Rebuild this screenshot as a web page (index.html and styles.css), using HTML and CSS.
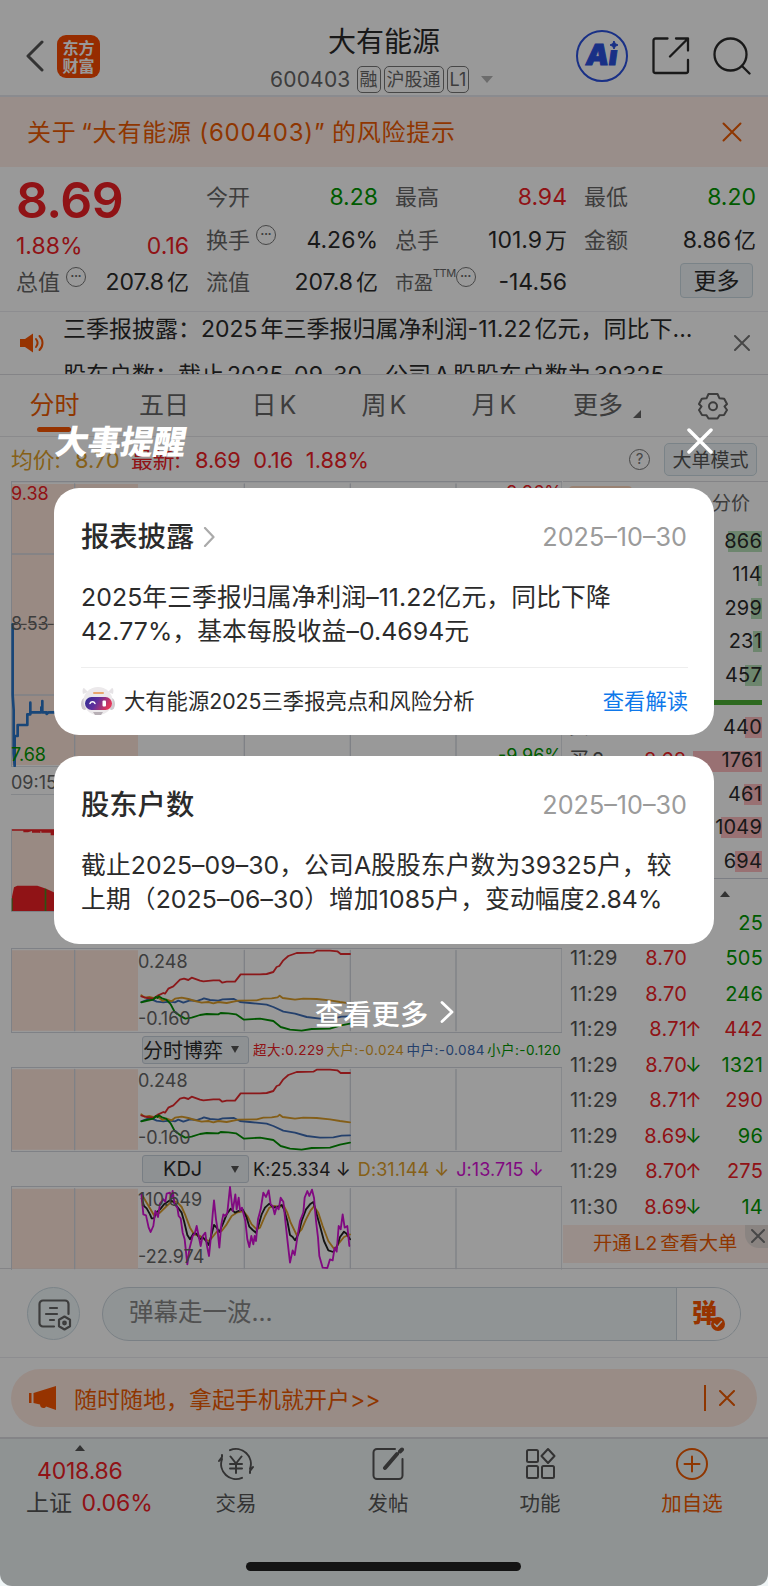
FILE: index.html
```html
<!DOCTYPE html>
<html lang="zh-CN">
  <head>
    <meta charset="UTF-8" />
    <meta name="viewport" content="width=device-width, initial-scale=1" />
    <title>大有能源 600403</title>
    <link rel="stylesheet" href="styles.css">
  </head>
  <body>
    <div class="app">
      <header class="header">
        <div class="header-left">
          <svg class="back" width="20" height="32" viewBox="0 0 20 32"><path d="M17 2 3 16l14 14" /></svg>
          <div class="logo">东方<br />财富</div>
        </div>
        <div class="header-title">
          <h1>大有能源</h1>
          <div class="sub">
            <span class="code">600403</span>
            <span class="tag">融</span>
            <span class="tag">沪股通</span>
            <span class="tag">L1</span>
            <i class="caret"></i>
          </div>
        </div>
        <div class="header-right">
          <div class="ai"><span>Ai</span><svg width="8" height="8" viewBox="0 0 8 8"><path d="M4 0 5.3 2.7 8 4 5.3 5.3 4 8 2.7 5.3 0 4 2.7 2.7Z" /></svg></div>
          <svg class="line-icon" width="38" height="38" viewBox="0 0 38 38"><path d="M15.500 1.500H3.500a2 2 0 0 0-2 2v30.500a2 2 0 0 0 2 2H34a2 2 0 0 0 2-2V23M24 1.500h12V13.500M36 1.500 18 19.500" /></svg>
          <svg class="line-icon" width="38" height="38" viewBox="0 0 38 38"><circle cx="17.500" cy="17.500" r="16" /><path d="m29 29 7.500 7.500" /></svg>
        </div>
      </header>

      <div class="banner">
        <span>关于<b class="ql">“</b>大有能源 (600403)<b class="qr">”</b>的风险提示</span>
        <svg class="x" width="20" height="20" viewBox="0 0 20 20"><path d="m1.500 1.500 17 17m0-17-17 17" /></svg>
      </div>

      <section class="quote">
        <div class="quote-col">
          <div class="price red">8.69</div>
          <div class="change red"><span>1.88%</span><span>0.16</span></div>
          <div class="item"><label>总值<i class="dots">•••</i></label><span>207.8<em>亿</em></span></div>
        </div>
        <div class="quote-col">
          <div class="item"><label>今开</label><span class="green">8.28</span></div>
          <div class="item"><label>换手<i class="dots">•••</i></label><span>4.26%</span></div>
          <div class="item"><label>流值</label><span>207.8<em>亿</em></span></div>
        </div>
        <div class="quote-col">
          <div class="item"><label>最高</label><span class="red">8.94</span></div>
          <div class="item"><label>总手</label><span>101.9<em>万</em></span></div>
          <div class="item"><label class="small">市盈<sup>TTM</sup><i class="dots">•••</i></label><span>-14.56</span></div>
        </div>
        <div class="quote-col">
          <div class="item"><label>最低</label><span class="green">8.20</span></div>
          <div class="item"><label>金额</label><span>8.86<em>亿</em></span></div>
          <div class="item"><label></label><button class="more">更多</button></div>
        </div>
      </section>

      <section class="news">
        <svg width="24" height="20" viewBox="0 0 24 20"><path class="fill" d="M0 6h5l8-5.500v19L5 14H0Z" /><path class="wave" d="M16 6c2 2.500 2 5.500 0 8M19.500 3c4 4 4 10 0 14" /></svg>
        <div class="news-list">
          <p>三季报披露：2025<u></u>年三季报归属净利润-11.22<u></u>亿元，同比下...</p>
          <p>股东户数：截止<u></u>2025-09-30，公司<u></u>A<u></u>股股东户数为<u></u>39325</p>
        </div>
        <svg class="x grey" width="16" height="16" viewBox="0 0 16 16"><path d="m1 1 14 14m0-14L1 15" /></svg>
      </section>

      <nav class="tabs">
        <span class="active">分时</span>
        <span>五日</span>
        <span>日<u></u>K</span>
        <span>周<u></u>K</span>
        <span>月<u></u>K</span>
        <span class="tab-more">更多<i></i></span>
        <svg width="30" height="28" viewBox="0 0 30 28"><path d="M10.500 2h9l2 4.300 4.700.4L29 12l-2.500 2.500L29 18l-3 5-4.500.2L19.500 26.500h-9L8.500 23.200 4 23 1 18l2.500-3.500L1 12l2.800-5.300 4.700-.4Z" /><circle cx="15" cy="14.300" r="4" /></svg>
      </nav>

      <div class="info">
        <span class="gold avg">均价: <b>8.70</b></span>
        <span class="red last">最新: <b>8.69</b><b>0.16</b><b>1.88%</b></span>
        <i class="help">?</i>
        <button class="mode">大单模式</button>
      </div>

      <div class="market">
        <div class="charts">
          <div class="chart time-chart">
            <svg width="551" height="286" viewBox="33 3 1653 858">
              <path class="auction" d="M35 12H414V855H35Z" />
              <path class="grid" d="M33 5H1686M33 222H1686M33 645H1686M33 861H1686M34 3V861M224 12V855M733 12V855M1051 12V855M1368 12V855M1686 3V861" />
              <path class="dash" d="M36 433H1686" />
              <path class="price-line" d="M38 433V645L41 690V820L44 858V768H53V735H82V703H91V668V697H124V682H127V663V697H140V702L146 697H240" />
            </svg>
            <span class="tl red">9.38</span>
            <span class="ml">8.53</span>
            <span class="bl green">7.68</span>
            <span class="tr red">9.96%</span>
            <span class="br green">-9.96%</span>
          </div>
          <div class="times">09:15</div>
          <div class="volume">
            <svg width="551" height="118" viewBox="33 942 1653 354">
              <path class="auction" d="M35 1048H414V1293H35Z" />
              <path class="grid" d="M33 942H1686M33 1295H1686M34 1048V1294" />
              <path class="vol-red" d="M36 1048H164V1066H152V1058H124V1054H121V1060L118 1058H96V1053L84 1057H70V1052H36ZM36 1293V1250L42 1222 52 1217H112L132 1224 145 1229 158 1235 164 1238V1293Z" />
              <path class="vol-green" d="M134 1226h5v67h-5ZM35 1255h3v38h-3Z" />
            </svg>
          </div>
          <div class="picker-row"><span class="picker">分时博弈<i></i></span></div>
          <div class="chart flow-chart">
            <svg width="551" height="85" viewBox="33 53 1653 255">
              <g id="flow">
                <path class="auction" d="M35 60H414V301H35Z" />
                <path class="grid" d="M33 54H1686M33 307H1686M34 54V307M224 60V301M733 60V301M1051 60V301M1368 60V301M1686 54V307" />
                <path class="l-blue" d="M424 215 440 209 455 207 470 214 490 216 510 214 525 216 535 211 550 217 570 210 590 212 605 207 612 204 630 209 655 211 668 207 702 206 720 215 750 218 800 223 820 230 850 244 885 250 920 260 960 265 1000 264 1025 259 1050 258" />
                <path class="l-gold" d="M424 195 434 202 448 200 460 203 474 201 488 212 500 208 515 213 525 205 545 202 565 206 585 212 605 217 625 215 640 219 655 215 680 218 715 211 770 210 790 205 815 204 833 201 839 196 848 203 885 208 910 205 950 206 990 210 1020 215 1050 219" />
                <path class="l-red" d="M424 198 440 203 460 205 475 195 490 188 495 190 505 175 520 168 540 148 552 145 565 149 575 142 600 151 610 153 640 150 658 150 667 157 680 154 705 154 722 132 780 132 800 131 820 125 830 110 838 107 850 90 865 77 890 68 940 67 950 61 990 61 1012 63 1022 71 1050 71" />
                <path class="l-green" d="M424 216 440 212 460 208 468 200 473 203 476 198 486 204 498 208 512 222 524 245 538 255 556 265 575 262 600 254 620 251 655 252 662 248 685 249 708 252 732 268 780 265 820 272 842 290 870 298 905 301 935 296 990 295 1020 286 1050 280" />
              </g>
            </svg>
            <span class="tl">0.248</span>
            <span class="bl">-0.160</span>
          </div>
          <div class="picker-row">
            <span class="picker">分时博弈<i></i></span>
            <span class="legend"><b class="red">超大:0.229</b><b class="gold">大户:-0.024</b><b class="blue">中户:-0.084</b><b class="green">小户:-0.120</b></span>
          </div>
          <div class="chart flow-chart">
            <svg width="551" height="85" viewBox="33 53 1653 255"><use href="#flow" /></svg>
            <span class="tl">0.248</span>
            <span class="bl">-0.160</span>
          </div>
          <div class="picker-row">
            <span class="picker kdj">KDJ<i></i></span>
            <span class="legend big"><b>K:25.334 ↓</b><b class="gold">D:31.144 ↓</b><b class="purple">J:13.715 ↓</b></span>
          </div>
          <div class="chart kdj-chart">
            <svg width="551" height="84" viewBox="33 765 1653 252">
              <path class="auction" d="M35 773H414V1013H35Z" />
              <path class="grid" d="M33 766H1686M34 766V1015M224 773V1013M733 773V1013M1051 773V1013M1368 773V1013M1686 766V1015" />
              <path class="l-gold" d="M425 790 440 815 462 853 480 845 500 825 515 812 530 812 545 828 555 850 570 890 582 910 600 915 615 925 628 930 640 915 652 900 665 900 680 880 695 855 710 845 730 840 742 855 755 880 770 895 780 890 795 855 808 830 822 825 840 828 850 822 862 845 872 875 890 912 905 895 918 865 932 838 942 826 955 845 968 885 985 930 1003 955 1018 935 1032 918 1050 910" />
              <path class="l-black" d="M425 803 432 825 440 832 450 850 455 862 462 862 468 845 480 835 492 820 510 808 520 812 530 825 545 845 552 870 562 912 570 925 580 908 590 908 600 925 608 918 618 930 626 942 632 920 642 882 650 890 658 903 668 880 680 850 692 833 705 845 715 840 728 835 740 860 748 887 758 897 768 905 775 885 785 850 795 830 808 818 820 830 830 828 845 822 852 835 862 870 870 912 878 918 885 928 895 910 905 870 918 835 930 820 940 813 950 850 960 885 972 930 985 958 1000 963 1010 950 1020 918 1032 902 1040 908 1050 925" />
              <path class="l-purple" d="M424 788 430 850 438 853 446 890 452 903 460 885 466 840 474 858 480 818 490 805 496 812 500 788 510 785 514 802 518 780 524 820 532 830 536 855 542 862 548 905 554 925 562 1000 568 955 578 915 584 908 590 885 596 915 602 945 608 915 616 905 620 940 627 975 632 925 638 850 642 808 648 865 652 890 658 950 664 880 670 850 676 855 682 845 690 768 698 840 706 790 710 835 716 800 720 838 726 830 736 870 742 925 748 948 754 915 760 940 764 915 768 930 774 865 782 835 790 785 798 798 806 778 812 820 818 825 824 850 830 828 836 835 842 800 850 812 856 870 862 925 870 995 878 958 884 972 892 920 900 870 910 845 914 800 922 780 928 795 936 776 942 800 948 870 954 920 958 975 968 1010 982 1011 990 985 998 988 1004 950 1010 962 1016 885 1022 895 1028 850 1034 890 1042 885 1048 945" />
            </svg>
            <span class="tl">110.649</span>
            <span class="bl">-22.974</span>
          </div>
        </div>

        <aside class="depth">
          <div class="depth-tabs"><i></i><span>分价</span></div>
          <div class="row ask"><span></span><span></span><b style="--w: 34px">866</b></div>
          <div class="row ask"><span></span><span></span><b style="--w: 4px">114</b></div>
          <div class="row ask"><span></span><span></span><b style="--w: 11px">299</b></div>
          <div class="row ask"><span></span><span></span><b style="--w: 9px">231</b></div>
          <div class="row ask"><span></span><span></span><b style="--w: 17px">457</b></div>
          <div class="ratio"></div>
          <div class="row bid"><span>买<u></u>1</span><span class="red"></span><b style="--w: 17px">440</b></div>
          <div class="row bid"><span>买<u></u>2</span><span class="red">8.68</span><b style="--w: 69px">1761</b></div>
          <div class="row bid"><span></span><span></span><b style="--w: 18px">461</b></div>
          <div class="row bid"><span></span><span></span><b style="--w: 41px">1049</b></div>
          <div class="row bid"><span></span><span></span><b style="--w: 27px">694</b></div>
          <div class="expand"><i></i></div>
          <div class="trade"><span></span><span></span><i></i><b class="green">25</b></div>
          <div class="trade"><span>11:29</span><span class="red">8.70</span><i></i><b class="green">505</b></div>
          <div class="trade"><span>11:29</span><span class="red">8.70</span><i></i><b class="green">246</b></div>
          <div class="trade"><span>11:29</span><span class="red">8.71</span><i class="red">↑</i><b class="red">442</b></div>
          <div class="trade"><span>11:29</span><span class="red">8.70</span><i class="green">↓</i><b class="green">1321</b></div>
          <div class="trade"><span>11:29</span><span class="red">8.71</span><i class="red">↑</i><b class="red">290</b></div>
          <div class="trade"><span>11:29</span><span class="red">8.69</span><i class="green">↓</i><b class="green">96</b></div>
          <div class="trade"><span>11:29</span><span class="red">8.70</span><i class="red">↑</i><b class="red">275</b></div>
          <div class="trade"><span>11:30</span><span class="red">8.69</span><i class="green">↓</i><b class="green">14</b></div>
          <div class="level2">开通<u></u>L2<u></u>查看大单<span class="level2-close"><svg class="x grey" width="14" height="14" viewBox="0 0 14 14"><path d="m1 1 12 12m0-12L1 13" /></svg></span></div>
        </aside>
      </div>

      <div class="barrage">
        <div class="barrage-set">
          <svg width="34" height="32" viewBox="0 0 34 32"><path d="M16 27.500H5a3.500 3.500 0 0 1-3.500-3.500V5A3.500 3.500 0 0 1 5 1.500h22A3.500 3.500 0 0 1 30.500 5v10M12 9h7M8 15h11M12 21h4" /><path d="m26.500 17.500 5.500 3.200v6.600l-5.500 3.200-5.500-3.200v-6.600Z" /><circle cx="26.500" cy="24" r="1.300" /></svg>
        </div>
        <div class="barrage-box">
          <span>弹幕走一波...</span>
          <div class="barrage-send">弹<svg width="14" height="14" viewBox="0 0 14 14"><circle cx="7" cy="7" r="7" /><path d="m3.500 7 2.500 2.500 4.500-5" /></svg></div>
        </div>
      </div>

      <div class="promo">
        <div class="promo-bar">
          <svg width="28" height="24" viewBox="0 0 28 24"><path d="M0 7h2.500v10H0ZM4.500 7 27 0v24L17 20.500c-1 2.500-6 2-6-2L4.500 17Z" /></svg>
          <span>随时随地，拿起手机就开户&gt;&gt;</span>
          <i class="sep"></i>
          <svg class="x" width="16" height="16" viewBox="0 0 16 16"><path d="m1 1 14 14m0-14L1 15" /></svg>
        </div>
      </div>

      <footer class="bottom">
        <div class="index">
          <i class="up"></i>
          <div class="point red">4018.86</div>
          <div>上证<u></u> <span class="red">0.06%</span></div>
        </div>
        <div class="nav">
          <svg width="36" height="34" viewBox="0 0 36 34"><path d="M12 3.200A15 15 0 0 1 32 22M24 30.800A15 15 0 0 1 4 12M1 14l3-4v-2M35 20l-3 4v2M12.500 9.500l5.500 7 5.500-7M12 17h12M12 21.500h12M18 17v9" /></svg>
          <span>交易</span>
        </div>
        <div class="nav">
          <svg width="34" height="34" viewBox="0 0 34 34"><path d="M24 2H6a3.500 3.500 0 0 0-3.500 3.500v23A3.500 3.500 0 0 0 6 32h22a3.500 3.500 0 0 0 3.500-3.500V12" /><path class="pen" d="m14 21 12-14M29 4.500l2-2" /></svg>
          <span>发帖</span>
        </div>
        <div class="nav">
          <svg width="34" height="34" viewBox="0 0 34 34"><rect x="4" y="3" width="11" height="12" rx="1.500" /><rect x="4" y="19" width="11" height="12" rx="1.500" /><rect x="19" y="19" width="12" height="12" rx="1.500" /><path d="m25 2 6.500 7-6.500 7-6.500-7Z" /></svg>
          <span>功能</span>
        </div>
        <div class="nav orange">
          <svg width="34" height="34" viewBox="0 0 34 34"><circle cx="17" cy="17" r="15" /><path d="M9.500 17h15M17 9.500v15" /></svg>
          <span>加自选</span>
        </div>
      </footer>
      <div class="home"></div>
    </div>

    <!-- reminder popup over the whole page -->
    <div class="mask">
      <div class="mask-head">
        <h2>大事提醒</h2>
        <svg width="26" height="26" viewBox="0 0 26 26"><path d="m2 2 22 22m0-22L2 24" /></svg>
      </div>
      <div class="card">
        <div class="card-head">
          <h3>报表披露<svg width="12" height="20" viewBox="0 0 12 20"><path d="m2 1 8.500 9L2 19" /></svg></h3>
          <time>2025–10–30</time>
        </div>
        <p>2025年三季报归属净利润–11.22亿元，同比下降<br />42.77%，基本每股收益–0.4694元</p>
        <div class="card-foot">
          <svg class="bot" width="34" height="30" viewBox="0 0 34 30">
            <defs>
              <linearGradient id="visor" x1="0" y1="0" x2="1" y2="0.300">
                <stop offset="0" stop-color="#2c2c93" />
                <stop offset="0.500" stop-color="#60309c" />
                <stop offset="1" stop-color="#e0355a" />
              </linearGradient>
            </defs>
            <path d="M2 8C1 4 2 2 3 2l4 4ZM32 8c1-4 0-6-1-6l-4 4Z" fill="#e6e3e6" />
            <ellipse cx="3.500" cy="18" rx="3.500" ry="6" fill="#cfc9cf" />
            <ellipse cx="30.500" cy="18" rx="3.500" ry="6" fill="#cfc9cf" />
            <ellipse cx="17" cy="15" rx="14.500" ry="14" fill="#ece9eb" />
            <path d="M12 26h10l-2 3h-6Z" fill="#b7afb5" />
            <rect x="12" y="6" width="11" height="2" rx="1" fill="#e9a66d" />
            <rect x="4" y="11" width="27" height="13" rx="6.500" fill="url(#visor)" />
            <path d="M9 17.500c1-2.500 4-2.500 5 0" fill="none" stroke="#fff" stroke-width="1.500" />
            <rect x="21.500" y="14.500" width="3.500" height="6" rx="1" fill="#fff" />
          </svg>
          <span>大有能源2025三季报亮点和风险分析</span>
          <a>查看解读</a>
        </div>
      </div>
      <div class="card second">
        <div class="card-head">
          <h3>股东户数</h3>
          <time>2025–10–30</time>
        </div>
        <p>截止2025–09–30，公司A股股东户数为39325户，较<br />上期（2025–06–30）增加1085户，变动幅度2.84%</p>
      </div>
      <div class="see-more">查看更多<svg width="14" height="22" viewBox="0 0 14 22"><path d="m2 1.500 10 9.500-10 9.500" /></svg></div>
    </div>
  </body>
</html>
```

FILE: styles.css
```css
* {
  margin: 0;
  padding: 0;
  box-sizing: border-box;
}
body {
  width: 768px;
  height: 1586px;
  position: relative;
  overflow: hidden;
  background: #fff;
  color: #2b2b2b;
  font-family: Inter, "Noto Sans CJK SC", sans-serif;
  font-size: 22px;
}
i,
em {
  font-style: normal;
}
b {
  font-weight: 400;
}
/* thin gap between latin and chinese glyphs */
u {
  display: inline-block;
  width: 3px;
}
svg {
  display: block;
  flex: none;
  fill: none;
  stroke: currentColor;
  stroke-linecap: round;
  stroke-linejoin: round;
}
button {
  font: inherit;
  color: inherit;
}
.red {
  color: #f02026;
}
.green {
  color: #009800;
}
.gold {
  color: #e0a028;
}
.blue {
  color: #3d6cb4;
}
.purple {
  color: #d810d8;
}
.orange {
  color: #ee5a00;
}
.x {
  color: #ee5a00;
  stroke-width: 2;
}
.x.grey {
  color: #777;
}

/* header */
.header {
  height: 97px;
  display: grid;
  grid-template-columns: 220px 1fr 220px;
  border-bottom: 2px solid #e6e8ee;
}
.header-left {
  display: flex;
  align-items: center;
  gap: 12px;
  padding: 16px 0 0 25px;
}
.back {
  color: #555;
  stroke-width: 3;
}
.logo {
  width: 43px;
  height: 43px;
  border-radius: 9px;
  background: #fb4a00;
  color: #fff;
  font-family: "Noto Sans CJK SC", sans-serif;
  font-size: 16px;
  font-weight: 700;
  line-height: 18px;
  padding-top: 3px;
  text-align: center;
}
.header-title {
  text-align: center;
}
h1 {
  margin-top: 22px;
  font-size: 28px;
  font-weight: 400;
  line-height: 40px;
}
.sub {
  display: flex;
  align-items: center;
  height: 34px;
  padding-left: 50px;
  color: #666;
  font-size: 21px;
}
.code {
  letter-spacing: 0.2px;
  margin-right: 6px;
}
.tag {
  height: 27px;
  line-height: 25px;
  border: 1.500px solid #777;
  border-radius: 5px;
  padding: 0 2px;
  margin-right: 3px;
  font-size: 18px;
}
.caret {
  margin-left: 9px;
  border: 6px solid transparent;
  border-top: 7px solid #b5b5b5;
  border-bottom: 0;
}
.header-right {
  display: flex;
  align-items: center;
  padding: 16px 0 0 28px;
}
.ai {
  flex: none;
  width: 52px;
  height: 52px;
  border: 2.500px solid #2a50e0;
  border-radius: 50%;
  position: relative;
  color: #2a50e0;
  font-size: 29px;
  font-weight: 900;
  line-height: 46px;
  text-align: center;
  margin-right: 24px;
}
.ai span {
  display: block;
  transform: skewX(-8deg);
  -webkit-text-stroke: 1px #2a50e0;
}
.ai svg {
  position: absolute;
  left: 32px;
  top: 9px;
  fill: #2a50e0;
  background: #fff;
  box-shadow: 0 0 0 1px #fff;
}
.line-icon {
  stroke-width: 2.300;
  margin-right: 23px;
}

.banner {
  height: 70px;
  display: flex;
  align-items: center;
  justify-content: space-between;
  padding: 0 26px 4px 27px;
  background: #ffede6;
  color: #ee5a00;
  font-size: 24px;
  letter-spacing: 0.800px;
}
.banner .x {
  margin-top: 3px;
}
.ql,
.qr {
  display: inline-block;
  width: 16px;
  text-align: right;
}
.qr {
  width: 18px;
  text-align: left;
}

/* quote */
.quote {
  height: 145px;
  padding: 9px 12px 0 16px;
  display: grid;
  grid-template-columns: 173px 172px 172px 172px;
  column-gap: 17px;
  border-bottom: 1px solid #ececf0;
  font-size: 23px;
}
.price {
  height: 49px;
  line-height: 48px;
  font-size: 50px;
  font-weight: 600;
  letter-spacing: -0.600px;
}
.change {
  height: 36px;
  padding-top: 3px;
  line-height: 36px;
}
.change,
.item {
  display: flex;
  justify-content: space-between;
}
.item {
  height: 42.500px;
  line-height: 42px;
}
.item em {
  font-size: 22px;
  margin-left: 3px;
}
.item label {
  display: flex;
  color: #666;
  font-size: 22px;
}
.item label.small {
  font-size: 19px;
  line-height: 46px;
}
.item sup {
  font-size: 11px;
  line-height: 24px;
  letter-spacing: -0.500px;
}
.dots {
  width: 20px;
  height: 20px;
  margin: 6px 0 0 6px;
  border: 1.500px solid #777;
  border-radius: 50%;
  font-size: 6.500px;
  line-height: 17px;
  text-align: center;
}
.small .dots {
  margin-left: 0;
}
.more {
  width: 73px;
  height: 35px;
  margin: 2px 3px 0 0;
  border: 1px solid #ccdbe3;
  border-radius: 4px;
  background: #f1f6f8;
  line-height: 32px;
}

.news {
  height: 63px;
  display: flex;
  align-items: center;
  padding: 0 18px 0 20px;
  border-bottom: 1px solid #dcdce2;
}
.fill {
  fill: #fb5500;
  stroke: none;
}
.wave {
  stroke: #fb5500;
  stroke-width: 2;
}
.news-list {
  width: 670px;
  height: 62px;
  margin: 0 auto 0 19px;
  overflow: hidden;
  font-size: 23px;
  white-space: nowrap;
}
.news-list p {
  height: 46px;
  line-height: 34px;
}

/* period tabs */
.tabs {
  height: 62px;
  display: flex;
  align-items: center;
  border-bottom: 1px solid #e6e6ea;
  color: #666;
  font-size: 25px;
}
.tabs span {
  width: 110px;
  height: 61px;
  line-height: 60px;
  text-align: center;
}
.tabs .active {
  width: 109px;
  color: #ee5a00;
  position: relative;
}
.active::after {
  content: "";
  position: absolute;
  left: 37px;
  bottom: 4px;
  width: 34px;
  height: 5px;
  border-radius: 3px;
  background: #fb5500;
}
.tabs .tab-more {
  width: 120px;
  padding-right: 22px;
  position: relative;
}
.tab-more i {
  position: absolute;
  left: 84px;
  top: 35px;
  border: 4px solid #666;
  border-top-color: transparent;
  border-left-color: transparent;
}
.tabs svg {
  margin-left: 29px;
  stroke-width: 2;
}

.info {
  height: 44px;
  display: flex;
  align-items: center;
  padding: 0 11px 0 11px;
  font-size: 21.800px;
}
.info > span {
  margin-top: -2px;
}
.info b {
  margin-left: 8px;
}
.info .last b + b {
  margin-left: 12.500px;
}
.avg {
  width: 120px;
}
.help {
  margin-left: auto;
  width: 21px;
  height: 21px;
  border: 1.500px solid #777;
  border-radius: 50%;
  color: #777;
  font-size: 15px;
  line-height: 18px;
  text-align: center;
}
.mode {
  width: 93px;
  height: 33px;
  margin-left: 14px;
  padding-bottom: 2px;
  border: 1px solid #ccdbe3;
  border-radius: 5px;
  background: #f1f6f8;
  color: #555;
  font-size: 19px;
}

/* charts */
.market {
  height: 788px;
  display: flex;
  border-bottom: 1px solid #dcdce2;
}
.charts {
  width: 563px;
  padding-left: 11px;
}
.chart {
  position: relative;
  color: #666;
  font-size: 18px;
  line-height: 20px;
}
.chart span {
  position: absolute;
  left: 0;
}
.auction {
  fill: #ffe6da;
  stroke: none;
}
.grid {
  stroke: #d4d8e0;
  stroke-width: 4;
}
.dash {
  stroke: #555;
  stroke-width: 3;
  stroke-dasharray: 16 11;
}
.price-line {
  stroke: #2a75c8;
  stroke-width: 8;
}
.l-red,
.l-blue,
.l-gold,
.l-green,
.l-black,
.l-purple {
  stroke-width: 5.500;
}
.l-red {
  stroke: #e8282c;
}
.l-blue {
  stroke: #3d6cb4;
}
.l-gold {
  stroke: #dc9d28;
}
.l-green {
  stroke: #009000;
}
.l-black {
  stroke: #222;
}
.l-purple {
  stroke: #d810d8;
}
.vol-red {
  fill: #f02026;
  stroke: none;
}
.vol-green {
  fill: #4a8a20;
  stroke: none;
}
.time-chart {
  height: 286px;
}
.chart .tl {
  top: 3px;
}
.time-chart .ml {
  top: 133px;
}
.time-chart .bl {
  top: 264px;
}
.chart .tr,
.chart .br {
  left: auto;
  right: 1px;
  top: 2px;
}
.chart .br {
  top: 265px;
}
.times {
  height: 27px;
  line-height: 31px;
  color: #666;
  font-size: 18px;
}
.volume {
  height: 118px;
}
.flow-chart {
  height: 85px;
}
.kdj-chart {
  height: 84px;
}
.flow-chart .tl,
.kdj-chart .tl {
  left: 127px;
  top: 4px;
}
.flow-chart .bl,
.kdj-chart .bl {
  left: 127px;
  top: 61px;
}
.picker-row {
  height: 34px;
  display: flex;
  align-items: center;
  padding-left: 131px;
}
.volume + .picker-row {
  height: 36px;
}
.picker {
  width: 107px;
  height: 28px;
  flex: none;
  display: flex;
  align-items: center;
  justify-content: space-between;
  padding: 0 9px 2px 0;
  border: 1px solid #c9d2dc;
  border-radius: 3px;
  background: #edf2f5;
  font-size: 20px;
}
.picker i {
  border: 4px solid transparent;
  border-top: 7px solid #555;
  border-bottom: 0;
}
.picker.kdj {
  padding: 0 9px 0 20px;
}
.legend {
  display: flex;
  gap: 2px;
  margin-left: 4px;
  padding-bottom: 2px;
  font-size: 13.500px;
  letter-spacing: 0.450px;
  white-space: nowrap;
}
.legend.big {
  gap: 7px;
  padding-bottom: 0;
  font-size: 18px;
  letter-spacing: 0.050px;
}

/* order book */
.depth {
  width: 205px;
  font-size: 20px;
}
.depth-tabs {
  height: 44px;
  display: flex;
  justify-content: space-between;
  padding: 4px 18px 0 6px;
  border-top: 1px solid #dcdce2;
  color: #666;
  font-size: 19px;
  line-height: 36px;
}
.depth-tabs i {
  width: 63px;
  height: 32px;
  border-radius: 4px;
  background: #ffd9c0;
}
.row {
  height: 33.400px;
  line-height: 33px;
  padding: 0 6px;
  display: grid;
  grid-template-columns: 50px 67px 1fr;
  color: #555;
}
.row span + span {
  text-align: right;
}
.row b {
  color: #2b2b2b;
  text-align: right;
  letter-spacing: 0.200px;
  background: linear-gradient(#b6e0b8, #b6e0b8) no-repeat right center / var(--w) 21px;
}
.bid b {
  background-image: linear-gradient(#ffbcc0, #ffbcc0);
}
.ratio {
  height: 19px;
  border: solid #fff;
  border-width: 8px 6px 6px 0;
  background: #4bb035;
}
.expand {
  height: 28px;
  border-top: 1px solid #cfd3dc;
  padding: 12px 0 0 157px;
}
.expand i,
.up {
  display: block;
  width: 10px;
  border: 5px solid transparent;
  border-bottom: 6px solid #555;
  border-top: 0;
}
.trade {
  height: 35.500px;
  line-height: 35px;
  padding: 0 5px 0 7px;
  display: grid;
  grid-template-columns: 50px 67px 14px 1fr;
  color: #555;
  letter-spacing: 0.200px;
}
.trade span + span,
.trade b {
  text-align: right;
}
.trade i {
  width: 14px;
  font-size: 20px;
  text-indent: -2px;
}
.level2 {
  height: 38px;
  background: #ffede6;
  color: #ee5a00;
  font-size: 19.300px;
  line-height: 36px;
  padding-left: 30px;
  position: relative;
  white-space: nowrap;
}
.level2-close {
  position: absolute;
  top: 0;
  right: 0;
  width: 23px;
  height: 23px;
  padding: 4px 0 0 6px;
  border-bottom-left-radius: 14px;
  background: #e6dcd8;
}

/* barrage input */
.barrage {
  height: 89px;
  display: flex;
  align-items: center;
  gap: 22px;
  padding: 1px 27px 0;
  border-bottom: 1px solid #ececf0;
}
.barrage-set {
  width: 53px;
  height: 53px;
  border: 1px solid #ccdbe3;
  border-radius: 50%;
  background: #f1f8fa;
  padding: 11px 0 0 10px;
  color: #666;
}
.barrage-set svg {
  stroke-width: 2.200;
}
.barrage-box {
  flex: 1;
  height: 54px;
  display: flex;
  align-items: center;
  border: 1px solid #ccd6de;
  border-radius: 27px;
  background: #f0f7f9;
  color: #888;
  font-size: 24.500px;
  overflow: hidden;
}
.barrage-box span {
  flex: 1;
  padding: 0 0 7px 26px;
}
.barrage-send {
  width: 64px;
  height: 52px;
  border-left: 1px solid #ccd6de;
  background: #fff;
  color: #fb5500;
  font-size: 25px;
  font-weight: 900;
  line-height: 50px;
  padding-left: 15px;
  position: relative;
}
.barrage-send svg {
  position: absolute;
  left: 34px;
  top: 29px;
  fill: #fb5500;
  stroke: #fff;
  stroke-width: 1.500;
}
.barrage-send circle {
  stroke: none;
}

.promo {
  height: 79px;
  padding: 11px 11px 0;
}
.promo-bar {
  height: 58px;
  display: flex;
  align-items: center;
  border-radius: 29px;
  background: #ffe9e0;
  padding: 0 22px 0 18px;
  color: #ee5a00;
  font-size: 23px;
}
.promo-bar svg:first-child {
  fill: #fb5500;
  stroke: none;
  margin-right: 17px;
}
.sep {
  width: 2px;
  height: 26px;
  margin: 0 13px 0 auto;
  background: #ee5a00;
}

/* bottom nav */
.bottom {
  height: 150px;
  display: flex;
  border-top: 2px solid #dcdce2;
  background: #eff5f6;
  font-size: 23px;
  color: #555;
}
.index {
  width: 160px;
  padding: 6px 0 0 26px;
  line-height: 32px;
  white-space: nowrap;
}
.point {
  padding: 4px 0 0 11px;
  letter-spacing: -0.200px;
}
.index .up {
  margin-left: 49px;
}
.nav {
  width: 152px;
  display: flex;
  flex-direction: column;
  align-items: center;
  padding-top: 8px;
  font-size: 20.500px;
}
.nav svg {
  stroke-width: 2;
  margin-bottom: 6px;
}
.nav .pen {
  stroke-width: 4;
}
.home {
  position: absolute;
  left: 246px;
  top: 1562px;
  width: 275px;
  height: 9px;
  border-radius: 5px;
  background: #222;
}

/* popup */
.mask {
  position: absolute;
  inset: 0;
  padding: 421px 54px 0;
  background: rgba(0, 0, 0, 0.4);
  border-radius: 0 0 12px 12px;
}
.mask-head {
  height: 67px;
  display: flex;
  justify-content: space-between;
  padding: 7px 1px 0 0;
  color: #fff;
}
.mask-head svg {
  stroke-width: 3.500;
}
h2 {
  margin-left: -1px;
  font-size: 33px;
  font-weight: 900;
  line-height: 28px;
  letter-spacing: -0.500px;
  transform: skewX(-10deg);
}
.card {
  height: 247px;
  padding: 24px 26px 0 27px;
  border-radius: 25px;
  background: #fff;
}
.card.second {
  height: 188px;
  margin-top: 21px;
}
.card-head {
  height: 50px;
  display: flex;
  justify-content: space-between;
  line-height: 50px;
}
h3 {
  display: flex;
  align-items: center;
  gap: 9px;
  font-size: 28.300px;
  font-weight: 500;
}
h3 svg {
  color: #aaa;
  stroke-width: 2.200;
}
.card time {
  color: #9b9b9b;
  font-size: 25.200px;
  padding-right: 1px;
}
.card p {
  height: 105px;
  padding-top: 18px;
  font-size: 24.800px;
  line-height: 34.300px;
  white-space: nowrap;
  letter-spacing: 0.080px;
}
.card-foot {
  display: flex;
  align-items: center;
  height: 68px;
  padding-bottom: 4px;
  border-top: 1px solid #eee;
  font-size: 21.300px;
}
.bot {
  stroke: none;
  margin: 3px 9px 0 0;
}
.card-foot a {
  margin-left: auto;
  color: #0f78ea;
}
.see-more {
  display: flex;
  align-items: center;
  gap: 12px;
  height: 40px;
  margin-top: 48px;
  padding-left: 261px;
  color: #fff;
  font-size: 28.300px;
  font-weight: 500;
}
.see-more svg {
  stroke-width: 2.800;
}
```
